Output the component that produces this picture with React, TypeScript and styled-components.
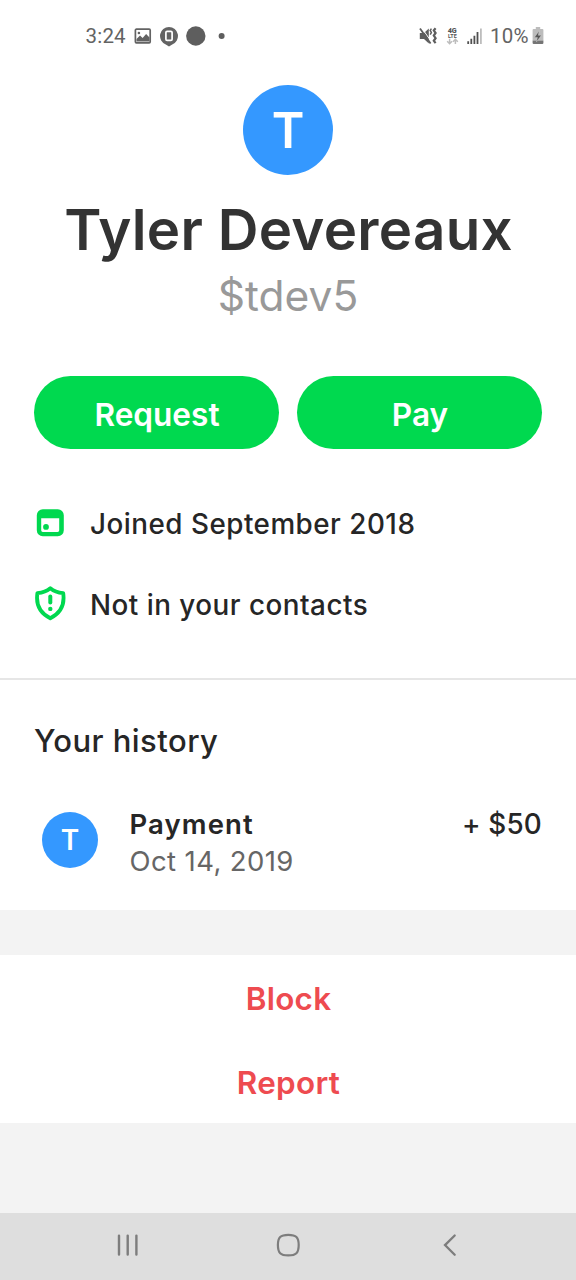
import React from 'react';
import styled, { createGlobalStyle } from 'styled-components';

const GlobalStyle = createGlobalStyle`
  * { box-sizing: border-box; }
  body { margin: 0; background: #fff; }
`;

const Screen = styled.main`
  display: flex;
  flex-direction: column;
  width: 576px;
  height: 1280px;
  overflow: hidden;
  background: #fff;
  color: #262626;
  font-family: Inter, 'Noto Sans', sans-serif;
`;

const StatusBar = styled.header`
  display: flex;
  justify-content: space-between;
  align-items: center;
  height: 72px;
  padding: 0 32px 0 85.5px;
  flex: none;
  color: #636363;
  font-family: Roboto, sans-serif;
  font-size: 20.5px;
  line-height: 24px;
`;

const StatusGroup = styled.div<{ $gap?: number }>`
  display: flex;
  align-items: center;
  gap: ${p => p.$gap ?? 0}px;
  svg { display: block; flex: none; }
`;

const Clock = styled.span`
  width: 41px;
  letter-spacing: 0.2px;
`;

const BatteryLevel = styled.span`
  width: 42px;
  letter-spacing: 0.2px;
`;

const Profile = styled.section`
  display: flex;
  flex-direction: column;
  align-items: center;
  padding: 12.5px 34px 0;
  height: 304px;
  flex: none;
`;

const Avatar = styled.div<{ $size: number; $font: number }>`
  display: flex;
  align-items: center;
  justify-content: center;
  flex: none;
  width: ${p => p.$size}px;
  height: ${p => p.$size}px;
  padding-top: 1px;
  border-radius: 50%;
  background: #3498ff;
  color: #fff;
  font-size: ${p => p.$font}px;
  font-weight: 600;
`;

const Name = styled.h1`
  margin: 25.5px 0 0 1px;
  font-size: 56.4px;
  line-height: 60px;
  font-weight: 600;
  letter-spacing: 0.3px;
  white-space: nowrap;
  color: #333;
`;

const Handle = styled.div`
  margin-top: 10.5px;
  font-size: 42.5px;
  line-height: 50px;
  color: #999;
`;

const Actions = styled.div`
  display: flex;
  gap: 18px;
  padding: 0 34px;
  flex: none;
`;

const PillButton = styled.button`
  flex: 1;
  height: 72.5px;
  padding: 5px 0 0 1px;
  border: 0;
  border-radius: 37px;
  background: #00d94f;
  color: #fff;
  font: 600 31.6px/40px Inter, sans-serif;
`;

const Facts = styled.ul`
  display: flex;
  flex-direction: column;
  gap: 41px;
  height: 231px;
  margin: 0;
  padding: 55px 34px 0;
  border-bottom: 2px solid #e6e6e6;
  list-style: none;
  flex: none;
`;

const Fact = styled.li`
  display: flex;
  align-items: center;
  gap: 23px;
  height: 40px;
  font-size: 27.8px;
  line-height: 40px;
  font-weight: 500;
  letter-spacing: 0.5px;
  svg { display: block; flex: none; }
`;

const History = styled.section`
  height: 230.5px;
  padding: 40px 34px 0;
  flex: none;
`;

const HistoryTitle = styled.h2`
  margin: 0;
  font-size: 31px;
  line-height: 42px;
  font-weight: 500;
  letter-spacing: 0.45px;
`;

const Transaction = styled.div`
  display: flex;
  align-items: flex-start;
  margin-top: 44px;
  padding-left: 8px;
`;

const AvatarSlot = styled.div`
  padding-top: 6px;
`;

const Details = styled.div`
  flex: 1;
  margin-left: 31.5px;
`;

const Amount = styled.div`
  font-size: 27.8px;
  line-height: 37px;
  font-weight: 500;
  letter-spacing: 0.2px;
`;

const Label = styled(Amount)`
  font-size: 27.5px;
  font-weight: 600;
  letter-spacing: 1.1px;
`;

const DateText = styled.div`
  font-size: 27.5px;
  line-height: 37px;
  letter-spacing: 0.4px;
  color: #666;
`;

const Band = styled.div<{ $h: number }>`
  height: ${p => p.$h}px;
  background: #f3f3f3;
  flex: none;
`;

const DangerActions = styled.section`
  display: flex;
  flex-direction: column;
  height: 168px;
  flex: none;
`;

const DangerButton = styled.button`
  flex: 1;
  padding: 4px 0 0 1px;
  border: 0;
  background: transparent;
  color: #ee4b50;
  font: 600 31.4px/40px Inter, sans-serif;
  letter-spacing: 0.3px;
`;

const NavBar = styled.nav`
  display: flex;
  justify-content: space-between;
  align-items: center;
  height: 67px;
  padding: 0 116px 3px;
  background: #dedede;
  flex: none;
  svg { display: block; }
`;

const PictureIcon = () => (
  <svg width="18" height="18" viewBox="0 0 18 18">
    <rect x="1.4" y="2.2" width="14.8" height="13.6" rx="1" fill="none" stroke="#636363" strokeWidth="1.7" />
    <circle cx="4.9" cy="6" r="1.3" fill="#636363" />
    <path d="M2.500 14.500V12L6 8.500 8.600 11 12.100 7l3.400 3.600v3.900z" fill="#636363" />
  </svg>
);

const PinIcon = () => (
  <svg width="20" height="22" viewBox="0 0 20 22">
    <path d="M10 2a9 9 0 0 0-3.200 17.400L10 21.400l3.200-2A9 9 0 0 0 10 2z" fill="#636363" />
    <rect x="6.900" y="6.400" width="6.200" height="9" rx="1.200" fill="none" stroke="#fff" strokeWidth="1.700" />
  </svg>
);

const DotsIcon = () => (
  <svg width="42" height="20" viewBox="0 0 42 20">
    <circle cx="9.800" cy="10" r="9.700" fill="#5e5e5e" />
    <circle cx="35.600" cy="10" r="3" fill="#5e5e5e" />
  </svg>
);

const MuteIcon = () => (
  <svg width="20" height="20" viewBox="0 0 20 20">
    <path d="M1.800 7H6l4.800-4.400v15L6 13H1.800z" fill="#5e5e5e" />
    <path d="M3.800 2L13.600 16" stroke="#fff" strokeWidth="1" />
    <path d="M2 2.400L12.600 17.400" stroke="#5e5e5e" strokeWidth="1.800" />
    <path d="M13.400 2.600l-1.200 1.800 1.200 2-1.200 2.200" fill="none" stroke="#5e5e5e" strokeWidth="1.500" />
    <path d="M17.600 2.200l-1.800 2.200L17.600 7l-1.800 2.600 1.800 2.600-1.800 2.600 1.800 2.400" fill="none" stroke="#5e5e5e" strokeWidth="2.200" />
  </svg>
);

const LteIcon = () => (
  <svg width="14" height="20" viewBox="0 0 14 20">
    <text x="7.200" y="6.900" textAnchor="middle" fontFamily="Roboto, sans-serif" fontWeight="900" fontSize="7.200" fill="#555">4G</text>
    <text x="7.400" y="12.100" textAnchor="middle" fontFamily="Roboto, sans-serif" fontWeight="700" fontSize="5.400" fill="#555">LTE</text>
    <path d="M4.600 12.800v4.700M2.200 15.300l2.400 2.400L7 15.300M10.400 18v-4.700M8 15.700l2.400-2.400 2.400 2.400" fill="none" stroke="#bdbdbd" strokeWidth="1.500" />
  </svg>
);

const SignalIcon = () => (
  <svg width="17" height="20" viewBox="0 0 17 20">
    <path d="M2.200 18v-2.800M5.300 18v-5.200M8.400 18V9.700M11.500 18V6" stroke="#505050" strokeWidth="1.800" />
    <path d="M14.900 18V2.600" stroke="#bdbdbd" strokeWidth="1.800" />
  </svg>
);

const BatteryIcon = () => (
  <svg width="12" height="20" viewBox="0 0 12 20">
    <path d="M3.800 1h4.400v2h2.200q1 0 1 1v10.500H.6V4q0-1 1-1h2.200z" fill="#bcbcbc" />
    <path d="M.6 14.500h10.800V17q0 1-1 1H1.600q-1 0-1-1z" fill="#757575" />
    <path d="M7.200 4.800L2.400 11.400h3l-1 4.600 5-6.700H6.300z" fill="#555" stroke="#d8d8d8" strokeWidth=".4" />
  </svg>
);

const CalendarIcon = () => (
  <svg width="33" height="36" viewBox="0 0 33 36">
    <path fillRule="evenodd" fill="#00d84f" d="M8.800 3.200h15a6 6 0 0 1 6 6v15a6 6 0 0 1-6 6h-15a6 6 0 0 1-6-6v-15a6 6 0 0 1 6-6zM7.200 12.300v12q0 1.600 1.600 1.600h14.800q1.600 0 1.600-1.600v-12z" />
    <circle cx="12" cy="20.900" r="2.900" fill="#00d84f" />
  </svg>
);

const ShieldIcon = () => (
  <svg width="33" height="40" viewBox="0 0 33 40">
    <path d="M16.300 3.200c-3.400 2.900-7.800 4.400-12.900 4.900-1.600 10.600 1.700 19.600 12.900 25.200C27.500 27.700 30.800 18.700 29.200 8.100c-5.100-.5-9.500-2-12.900-4.900z" fill="none" stroke="#00d84f" strokeWidth="3.800" strokeLinejoin="round" />
    <path d="M16.300 11.500v6" stroke="#00d84f" strokeWidth="4" strokeLinecap="round" />
    <circle cx="16.300" cy="23.900" r="2.200" fill="#00d84f" />
  </svg>
);

const RecentsIcon = () => (
  <svg width="24" height="26" viewBox="0 0 24 26">
    <path d="M3 3.600v19M11.700 3.600v19M20.400 3.600v19" stroke="#7d7d7d" strokeWidth="2.400" strokeLinecap="round" />
  </svg>
);

const HomeIcon = () => (
  <svg width="30" height="26" viewBox="0 0 30 26">
    <path d="M13.300 2.800c7.800 0 10.400 2.400 10.400 10.300s-2.600 10.300-10.400 10.300S2.900 21 2.900 13.100 5.500 2.800 13.300 2.800z" fill="none" stroke="#7d7d7d" strokeWidth="2.200" />
  </svg>
);

const BackIcon = () => (
  <svg width="20" height="26" viewBox="0 0 20 26">
    <path d="M14.700 3.500L5 13.100l9.700 9.600" fill="none" stroke="#7d7d7d" strokeWidth="2.300" strokeLinecap="round" />
  </svg>
);

export default function App() {
  return (
    <Screen>
      <GlobalStyle />
      <StatusBar>
        <StatusGroup $gap={7}>
          <Clock>3:24</Clock>
          <PictureIcon />
          <PinIcon />
          <DotsIcon />
        </StatusGroup>
        <StatusGroup $gap={7}>
          <MuteIcon />
          <LteIcon />
          <SignalIcon />
          <StatusGroup>
            <BatteryLevel>10%</BatteryLevel>
            <BatteryIcon />
          </StatusGroup>
        </StatusGroup>
      </StatusBar>
      <Profile>
        <Avatar $size={90} $font={49.5}>T</Avatar>
        <Name>Tyler Devereaux</Name>
        <Handle>$tdev5</Handle>
      </Profile>
      <Actions>
        <PillButton>Request</PillButton>
        <PillButton>Pay</PillButton>
      </Actions>
      <Facts>
        <Fact><CalendarIcon />Joined September 2018</Fact>
        <Fact><ShieldIcon />Not in your contacts</Fact>
      </Facts>
      <History>
        <HistoryTitle>Your history</HistoryTitle>
        <Transaction>
          <AvatarSlot><Avatar $size={56} $font={28}>T</Avatar></AvatarSlot>
          <Details>
            <Label>Payment</Label>
            <DateText>Oct 14, 2019</DateText>
          </Details>
          <Amount>+ $50</Amount>
        </Transaction>
      </History>
      <Band $h={45} />
      <DangerActions>
        <DangerButton>Block</DangerButton>
        <DangerButton>Report</DangerButton>
      </DangerActions>
      <Band $h={90} />
      <NavBar>
        <RecentsIcon />
        <HomeIcon />
        <BackIcon />
      </NavBar>
    </Screen>
  );
}
